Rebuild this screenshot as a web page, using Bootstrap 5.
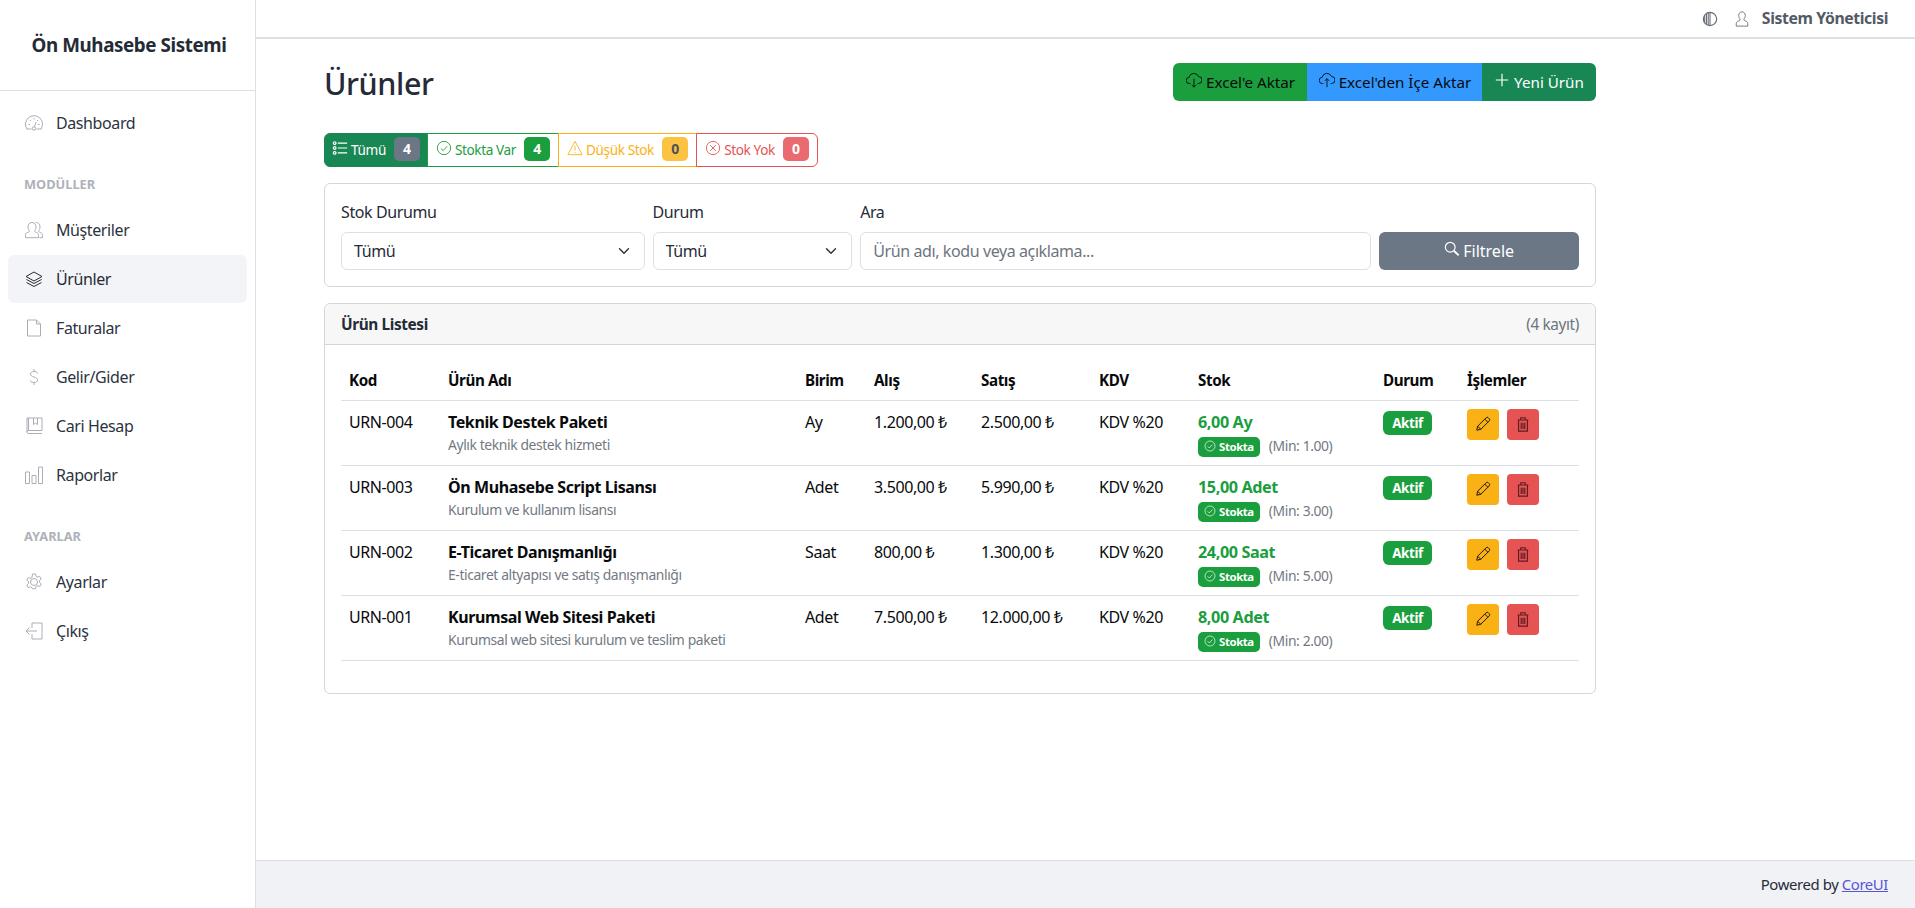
<!DOCTYPE html>
<html lang="tr">

<head>
    <meta charset="UTF-8">
    <meta name="viewport" content="width=device-width, initial-scale=1">
    <title>Ürünler - Ön Muhasebe Sistemi</title>
    <link href="https://cdn.jsdelivr.net/npm/bootstrap@5.3.3/dist/css/bootstrap.min.css" rel="stylesheet">
    <style>
        body { font-family: "Noto Sans", "Open Sans", sans-serif; letter-spacing: -0.025em; color: #252b36; background: #fff; }
        .ikon { width: 18px; height: 18px; fill: none; stroke: currentColor; stroke-width: 1; flex-shrink: 0; }
        .ikon-k { width: 16px; height: 16px; margin-top: -4px; }

        /* sol menu */
        .sayfa-kap { height: 908px; }
        .yan-menu { width: 256px; flex-shrink: 0; border-right: 1px solid #dbdfe6; }
        .marka { height: 91px; border-bottom: 1px solid #dbdfe6; font-size: 18.8px; font-weight: 700; padding-left: 3px; }
        .menu-alan { padding: 8px; }
        .menu-link { display: flex; align-items: center; height: 48px; padding: 0 17px; margin-bottom: 1px; color: #2c3340; border-radius: 6px; text-decoration: none; }
        .menu-link .ikon { color: #a9aeb6; margin-right: 13px; }
        .menu-link.secili { background: #f3f4f7; color: #252b36; }
        .menu-link.secili .ikon { color: #252b36; }
        .menu-baslik { margin-top: 16px; padding: 12px 16px; font-size: 12.8px; line-height: 19px; font-weight: 700; color: #aeb2b9; letter-spacing: 0; }

        /* ust bar */
        .ust-bar { height: 39px; border-bottom: 2px solid #dbdfe6; padding-right: 27px; font-size: 15.8px; color: #535a66; }
        .ust-bar .ikon { width: 16px; height: 16px; color: #666c76; }

        .icerik { width: 1272px; margin-left: 68px; padding-top: 24px; }
        .sayfa-baslik { font-size: 30.5px; font-weight: 500; height: 38px; line-height: 40px; margin: 0; }
        .btn-group > .ust-btn { height: 38px; padding: 0; font-size: 15.2px; border: 0; display: flex; align-items: center; justify-content: center; gap: 4px; white-space: nowrap; }
        .btn-group > .btn-yesil { background: #1b9e3e; color: #080a0c; flex: 0 0 135px; }
        .btn-group > .btn-mavi { background: #3399ff; color: #080a0c; flex: 0 0 176px; }
        .btn-group > .btn-koyu { background: #198754; color: #fff; flex: 0 0 114px; }

        /* stok sekmeleri */
        .btn-group > .stok-sekme { height: 34px; padding: 0; font-size: 13.6px; display: flex; align-items: center; justify-content: center; gap: 3px; background: #fff; border: 1px solid; margin-left: -1px; white-space: nowrap; }
        .stok-sekme .rozet-sayi { margin-left: 5px; width: 26px; height: 24px; line-height: 24px; padding: 0; font-size: 14px; border-radius: 5px; }
        .btn-group > .sekme-tumu { background: #198754; border-color: #198754; color: #fff; margin-left: 0; flex: 0 0 104px; }
        .btn-group > .sekme-var { border-color: #1b9e3e; color: #1b9e3e; flex: 0 0 132px; }
        .btn-group > .sekme-az { border-color: #f9b115; color: #f9b115; flex: 0 0 139px; }
        .btn-group > .sekme-yok { border-color: #e55353; color: #e55353; flex: 0 0 122px; }
        .renk-gri { background: #6b7785; color: #fff; }
        .renk-yesil { background: #1b9e3e; color: #fff; }
        .renk-sari { background: #fcc343; color: #4d5158; }
        .renk-kirmizi { background: #ea6b6f; color: #fff; }

        .kart-kenar { border: 1px solid #d4d6d9; border-radius: 6px; }
        .form-select, .form-control { border-color: #dbdfe6; height: 38px; color: #252b36; letter-spacing: -0.025em; }
        .form-control::placeholder { color: #6d7480; }
        .btn-filtre { height: 38px; background: #6b7785; color: #fff; border: 0; display: flex; align-items: center; justify-content: center; gap: 3px; }

        .liste-ust { height: 41px; padding: 1px 16px 0; background: #f7f7f7; border-bottom: 1px solid #d4d6d9; border-radius: 6px 6px 0 0; font-size: 15.4px; }
        .urun-tablo { table-layout: fixed; color: #080a0c; --bs-table-color: #080a0c; font-size: 16px; }
        .urun-tablo td, .urun-tablo th { border-color: #dbdfe6; padding: 8px; }
        .urun-tablo th { height: 39px; font-size: 15.2px; }
        .urun-tablo td { height: 65px; vertical-align: top; padding-top: 9px; }
        .urun-tablo th:nth-child(1) { width: 99px; }
        .urun-tablo th:nth-child(2) { width: 357px; }
        .urun-tablo th:nth-child(3) { width: 69px; }
        .urun-tablo th:nth-child(4) { width: 107px; }
        .urun-tablo th:nth-child(5) { width: 118px; }
        .urun-tablo th:nth-child(6) { width: 99px; }
        .urun-tablo th:nth-child(7) { width: 185px; }
        .urun-tablo th:nth-child(8) { width: 84px; }
        .urun-tablo th:nth-child(9) { width: 120px; }
        .urun-ad { display: block; font-weight: 700; line-height: 24px; }
        .urun-not { display: block; font-size: 13.9px; line-height: 21px; color: #737983; }
        .stok-mik { display: block; font-weight: 700; line-height: 24px; color: #1b9e3e; font-size: 16.2px; }
        .stok-alt { display: flex; align-items: center; gap: 9px; height: 20px; margin-top: 3px; font-size: 13.9px; color: #737983; }
        .rozet-stok { background: #1b9e3e; color: #fff; height: 20px; padding: 0 6px; border-radius: 5px; font-size: 11.4px; font-weight: 700; display: flex; align-items: center; gap: 3px; }
        .rozet-stok .ikon { width: 12px; height: 12px; margin-top: -2px; }
        .rozet-aktif { display: inline-block; background: #1b9e3e; color: #fff; width: 49px; height: 24px; line-height: 24px; border-radius: 6px; text-align: center; font-size: 13.4px; font-weight: 700; margin-top: 1px; vertical-align: top; }
        .islem-satir { margin-top: -1px; }
        .islem-btn { width: 32px; height: 31px; padding: 0; border: 0; border-radius: 4px; display: flex; align-items: center; justify-content: center; color: #080a0c; }
        .islem-btn .ikon-k { margin-top: 0; }
        .islem-sari { background: #f9b115; }
        .islem-kirmizi { background: #e55353; color: #5e1d22; }

        .alt-bar { height: 48px; flex-shrink: 0; background: #f0f2f6; border-top: 1px solid #dbdfe6; padding-right: 27px; font-size: 14.9px; }
        .alt-bar a { color: #5856d6; }
    </style>
</head>

<body>

    <!-- ikonlar -->
    <svg width="0" height="0" class="d-block position-absolute">
        <symbol id="i-gosterge" viewBox="0 0 18 18"><path d="M1.500 15h5M11.500 15h5M2 15A8.500 8.500 0 1 1 16 15"/><circle cx="9" cy="14.500" r="1.700"/><path d="M9.500 12.800 11 8M3.500 10.500h1.500M13 10.500h1.500M9 4v1.500M5 6l1 1M13 6l-1 1"/></symbol>
        <symbol id="i-kisiler" viewBox="0 0 18 18"><path d="M7 1.500c2.500 0 4 2 4 4.500 0 2-1 3.200-1.500 4 0 .8 1.500 1.200 2.500 1.700s1.500 1.500 1.500 3v2H.5v-2c0-1.500.5-2.500 1.500-3s2.500-.9 2.500-1.700C4 9.200 3 8 3 6c0-2.500 1.500-4.500 4-4.500z"/><path d="M10.500 1.500c2.500-.5 4.500 1.500 4.500 4.500 0 2-1 3.200-1.500 4 0 .8 1.500 1.200 2.500 1.700s1.500 1.500 1.500 3v2h-3"/></symbol>
        <symbol id="i-katman" viewBox="0 0 18 18"><path d="M9 2 17 6.500 9 11 1 6.500zM1.500 9.500 9 13.500l7.500-4M1.500 12.500 9 16.500l7.500-4"/></symbol>
        <symbol id="i-belge" viewBox="0 0 18 18"><path d="M2.500 1h9l4 4v12h-13zM11.500 1v4h4"/></symbol>
        <symbol id="i-dolar" viewBox="0 0 18 18"><path d="M12.500 5.500C12.500 4 11 3.500 9 3.500S5.500 4.500 5.500 6s1.500 2.500 3.500 3 3.500 1.300 3.500 3-1.500 2.500-3.500 2.500S5.500 14 5.500 12.500M9 1v2.500M9 14.500V17"/></symbol>
        <symbol id="i-kitap" viewBox="0 0 18 18"><path d="M2 15V1h15v12.500H3.500A1.500 1.500 0 0 0 2 15a1.500 1.500 0 0 0 1.500 1.500H17M3.500 1v12.500M8.500 1v6.500l2-1.500 2 1.500V1"/></symbol>
        <symbol id="i-grafik" viewBox="0 0 18 18"><path d="M.5 6h4v11.500h-4zM7 9.500h4v8H7zM13.500 1h4v16.500h-4z"/></symbol>
        <symbol id="i-cark" viewBox="0 0 18 18"><circle cx="9" cy="9" r="3.500"/><path d="M7.500 1h3l.5 2.300 1.500.8 2.200-.8 1.500 2.600-1.700 1.600v1.800l1.700 1.600-1.500 2.600-2.200-.8-1.500.8-.5 2.300h-3L7 14.700l-1.500-.8-2.200.8-1.500-2.600 1.700-1.600V8.700L1.800 7.100l1.500-2.600 2.200.8 1.500-.8z"/></symbol>
        <symbol id="i-cikis" viewBox="0 0 18 18"><path d="M7 6V1h10v16H7v-5M1 9h11M4.500 5.500 1 9l3.500 3.500"/></symbol>
        <symbol id="i-kontrast" viewBox="0 0 18 18"><circle cx="9" cy="9" r="7.500" stroke-width="1.300"/><path d="M9 1.500v15M7 2v14M5 3v12M3 5v8" stroke-width="1.200"/></symbol>
        <symbol id="i-kisi" viewBox="0 0 18 18"><path d="M9 1c2.300 0 3.700 1.800 3.700 4.200 0 1.900-.9 3-1.500 3.800v1c0 .7 1.300 1 2.400 1.500s1.900 1.500 1.900 3V17H2.500v-2.500c0-1.500.8-2.500 1.900-3s2.400-.8 2.400-1.500V9c-.6-.8-1.500-1.900-1.500-3.800C5.300 2.800 6.700 1 9 1z"/></symbol>
        <symbol id="i-indir" viewBox="0 0 18 18"><path d="M5 13H4a3.500 3.500 0 0 1-.5-7A5.500 5.500 0 0 1 14 5a4 4 0 0 1 0 8h-1M9 7.500V17M6.500 14.500 9 17l2.500-2.500"/></symbol>
        <symbol id="i-yukle" viewBox="0 0 18 18"><path d="M5 13H4a3.500 3.500 0 0 1-.5-7A5.500 5.500 0 0 1 14 5a4 4 0 0 1 0 8h-1M9 17V7.500M6.500 10 9 7.500l2.500 2.500"/></symbol>
        <symbol id="i-arti" viewBox="0 0 18 18"><path d="M9 2v14M2 9h14" stroke-width="1.300"/></symbol>
        <symbol id="i-liste" viewBox="0 0 18 18"><circle cx="3" cy="3.500" r="1.500" stroke-width="1.300"/><circle cx="3" cy="9" r="1.500" stroke-width="1.300"/><circle cx="3" cy="14.500" r="1.500" stroke-width="1.300"/><path d="M6.500 3.500H17M6.500 9H17M6.500 14.500H17" stroke-width="1.300"/></symbol>
        <symbol id="i-tamam" viewBox="0 0 18 18"><circle cx="9" cy="9" r="7.500"/><path d="M5.500 9.500 8 12l4.500-5"/></symbol>
        <symbol id="i-uyari" viewBox="0 0 18 18"><path d="M9 1.500 17 16.500H1zM9 6.500v5.500M9 13.500v1.200"/></symbol>
        <symbol id="i-iptal" viewBox="0 0 18 18"><circle cx="9" cy="9" r="7.500"/><path d="M5.800 5.800l6.400 6.400M12.200 5.800l-6.400 6.400"/></symbol>
        <symbol id="i-ara" viewBox="0 0 18 18"><circle cx="7" cy="7" r="5.500" stroke-width="1.300"/><path d="M11 11l5.500 5" stroke-width="2"/></symbol>
        <symbol id="i-kalem" viewBox="0 0 18 18"><path d="M2 16l1-4.500L12.500 2a1.800 1.800 0 0 1 2.500 0l1 1a1.800 1.800 0 0 1 0 2.500L6.500 15zM3 11.500 6.500 15M11 3.500 14.500 7"/></symbol>
        <symbol id="i-cop" viewBox="0 0 18 18"><path d="M3 4.500h12M6.500 4.500V2h5v2.500M4 4.500V17h10V4.500M7 7.500v7M9 7.500v7M11 7.500v7" stroke-width="1.300"/></symbol>
    </svg>

    <div class="d-flex sayfa-kap">

        <!-- Menu -->
        <aside class="yan-menu">
            <div class="marka d-flex align-items-center justify-content-center">Ön Muhasebe Sistemi</div>
            <nav class="menu-alan">
                <a class="menu-link" href="#"><svg class="ikon"><use href="#i-gosterge"/></svg>Dashboard</a>
                <div class="menu-baslik">MODÜLLER</div>
                <a class="menu-link" href="#"><svg class="ikon"><use href="#i-kisiler"/></svg>Müşteriler</a>
                <a class="menu-link secili" href="#"><svg class="ikon"><use href="#i-katman"/></svg>Ürünler</a>
                <a class="menu-link" href="#"><svg class="ikon"><use href="#i-belge"/></svg>Faturalar</a>
                <a class="menu-link" href="#"><svg class="ikon"><use href="#i-dolar"/></svg>Gelir/Gider</a>
                <a class="menu-link" href="#"><svg class="ikon"><use href="#i-kitap"/></svg>Cari Hesap</a>
                <a class="menu-link" href="#"><svg class="ikon"><use href="#i-grafik"/></svg>Raporlar</a>
                <div class="menu-baslik">AYARLAR</div>
                <a class="menu-link" href="#"><svg class="ikon"><use href="#i-cark"/></svg>Ayarlar</a>
                <a class="menu-link" href="#"><svg class="ikon"><use href="#i-cikis"/></svg>Çıkış</a>
            </nav>
        </aside>

        <div class="flex-grow-1 d-flex flex-column">
            <header class="ust-bar d-flex align-items-center justify-content-end">
                <svg class="ikon me-3"><use href="#i-kontrast"/></svg>
                <svg class="ikon me-2"><use href="#i-kisi"/></svg>
                <strong class="ms-1">Sistem Yöneticisi</strong>
            </header>

            <main class="icerik">
                <div class="d-flex justify-content-between align-items-center mb-4 pb-2">
                    <h1 class="sayfa-baslik">Ürünler</h1>
                    <div class="btn-group">
                        <button type="button" class="btn ust-btn btn-yesil"><svg class="ikon ikon-k"><use href="#i-indir"/></svg>Excel'e Aktar</button>
                        <button type="button" class="btn ust-btn btn-mavi"><svg class="ikon ikon-k"><use href="#i-yukle"/></svg>Excel'den İçe Aktar</button>
                        <button type="button" class="btn ust-btn btn-koyu"><svg class="ikon ikon-k"><use href="#i-arti"/></svg>Yeni Ürün</button>
                    </div>
                </div>

                <div class="btn-group mb-3">
                    <a href="#" class="btn stok-sekme sekme-tumu"><svg class="ikon ikon-k"><use href="#i-liste"/></svg>Tümü <span class="badge rozet-sayi renk-gri">4</span></a>
                    <a href="#" class="btn stok-sekme sekme-var"><svg class="ikon ikon-k"><use href="#i-tamam"/></svg>Stokta Var <span class="badge rozet-sayi renk-yesil">4</span></a>
                    <a href="#" class="btn stok-sekme sekme-az"><svg class="ikon ikon-k"><use href="#i-uyari"/></svg>Düşük Stok <span class="badge rozet-sayi renk-sari">0</span></a>
                    <a href="#" class="btn stok-sekme sekme-yok"><svg class="ikon ikon-k"><use href="#i-iptal"/></svg>Stok Yok <span class="badge rozet-sayi renk-kirmizi">0</span></a>
                </div>

                <div class="kart-kenar p-3 mb-3">
                    <form class="row g-2">
                        <div class="col-md-3">
                            <label class="form-label" for="stokDurumu">Stok Durumu</label>
                            <select class="form-select" id="stokDurumu"><option>Tümü</option></select>
                        </div>
                        <div class="col-md-2">
                            <label class="form-label" for="durum">Durum</label>
                            <select class="form-select" id="durum"><option>Tümü</option></select>
                        </div>
                        <div class="col-md-5">
                            <label class="form-label" for="ara">Ara</label>
                            <input type="text" class="form-control" id="ara" placeholder="Ürün adı, kodu veya açıklama...">
                        </div>
                        <div class="col-md-2 d-flex align-items-end">
                            <button type="button" class="btn btn-filtre w-100"><svg class="ikon ikon-k"><use href="#i-ara"/></svg>Filtrele</button>
                        </div>
                    </form>
                </div>

                <div class="kart-kenar">
                    <div class="liste-ust d-flex justify-content-between align-items-center">
                        <strong>Ürün Listesi</strong>
                        <span class="text-secondary">(4 kayıt)</span>
                    </div>
                    <div class="p-3">
                        <table class="table urun-tablo mb-3" id="urunTablo">
                            <thead>
                                <tr>
                                    <th>Kod</th><th>Ürün Adı</th><th>Birim</th><th>Alış</th><th>Satış</th><th>KDV</th><th>Stok</th><th>Durum</th><th>İşlemler</th>
                                </tr>
                            </thead>
                            <tbody>
                                <tr>
                                    <td>URN-004</td>
                                    <td><span class="urun-ad">Teknik Destek Paketi</span><span class="urun-not">Aylık teknik destek hizmeti</span></td>
                                    <td>Ay</td><td>1.200,00 ₺</td><td>2.500,00 ₺</td><td>KDV %20</td>
                                    <td><span class="stok-mik">6,00 Ay</span><div class="stok-alt"><span class="rozet-stok"><svg class="ikon"><use href="#i-tamam"/></svg>Stokta</span>(Min: 1.00)</div></td>
                                    <td><span class="rozet-aktif">Aktif</span></td>
                                    <td><div class="d-flex gap-2 islem-satir"><button type="button" class="islem-btn islem-sari"><svg class="ikon ikon-k"><use href="#i-kalem"/></svg></button><button type="button" class="islem-btn islem-kirmizi"><svg class="ikon ikon-k"><use href="#i-cop"/></svg></button></div></td>
                                </tr>
                                <tr>
                                    <td>URN-003</td>
                                    <td><span class="urun-ad">Ön Muhasebe Script Lisansı</span><span class="urun-not">Kurulum ve kullanım lisansı</span></td>
                                    <td>Adet</td><td>3.500,00 ₺</td><td>5.990,00 ₺</td><td>KDV %20</td>
                                    <td><span class="stok-mik">15,00 Adet</span><div class="stok-alt"><span class="rozet-stok"><svg class="ikon"><use href="#i-tamam"/></svg>Stokta</span>(Min: 3.00)</div></td>
                                    <td><span class="rozet-aktif">Aktif</span></td>
                                    <td><div class="d-flex gap-2 islem-satir"><button type="button" class="islem-btn islem-sari"><svg class="ikon ikon-k"><use href="#i-kalem"/></svg></button><button type="button" class="islem-btn islem-kirmizi"><svg class="ikon ikon-k"><use href="#i-cop"/></svg></button></div></td>
                                </tr>
                                <tr>
                                    <td>URN-002</td>
                                    <td><span class="urun-ad">E-Ticaret Danışmanlığı</span><span class="urun-not">E-ticaret altyapısı ve satış danışmanlığı</span></td>
                                    <td>Saat</td><td>800,00 ₺</td><td>1.300,00 ₺</td><td>KDV %20</td>
                                    <td><span class="stok-mik">24,00 Saat</span><div class="stok-alt"><span class="rozet-stok"><svg class="ikon"><use href="#i-tamam"/></svg>Stokta</span>(Min: 5.00)</div></td>
                                    <td><span class="rozet-aktif">Aktif</span></td>
                                    <td><div class="d-flex gap-2 islem-satir"><button type="button" class="islem-btn islem-sari"><svg class="ikon ikon-k"><use href="#i-kalem"/></svg></button><button type="button" class="islem-btn islem-kirmizi"><svg class="ikon ikon-k"><use href="#i-cop"/></svg></button></div></td>
                                </tr>
                                <tr>
                                    <td>URN-001</td>
                                    <td><span class="urun-ad">Kurumsal Web Sitesi Paketi</span><span class="urun-not">Kurumsal web sitesi kurulum ve teslim paketi</span></td>
                                    <td>Adet</td><td>7.500,00 ₺</td><td>12.000,00 ₺</td><td>KDV %20</td>
                                    <td><span class="stok-mik">8,00 Adet</span><div class="stok-alt"><span class="rozet-stok"><svg class="ikon"><use href="#i-tamam"/></svg>Stokta</span>(Min: 2.00)</div></td>
                                    <td><span class="rozet-aktif">Aktif</span></td>
                                    <td><div class="d-flex gap-2 islem-satir"><button type="button" class="islem-btn islem-sari"><svg class="ikon ikon-k"><use href="#i-kalem"/></svg></button><button type="button" class="islem-btn islem-kirmizi"><svg class="ikon ikon-k"><use href="#i-cop"/></svg></button></div></td>
                                </tr>
                            </tbody>
                        </table>
                    </div>
                </div>
            </main>

            <footer class="alt-bar mt-auto d-flex align-items-center justify-content-end">
                <span>Powered by <a href="#">CoreUI</a></span>
            </footer>
        </div>
    </div>

    <script src="https://cdn.jsdelivr.net/npm/bootstrap@5.3.3/dist/js/bootstrap.bundle.min.js"></script>

</body>

</html>
